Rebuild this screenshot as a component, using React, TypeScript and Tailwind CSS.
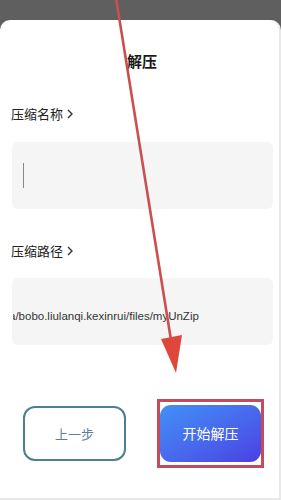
import React from "react";

export default function App() {
  const font = { fontFamily: '"Noto Sans CJK SC", "Liberation Sans", sans-serif' };
  return (
    <div className="relative w-[281px] h-[500px] bg-[#5f5f5f] pt-[20px] overflow-hidden" style={font}>
      <div className="h-[480px] bg-white rounded-t-[10px] border-r-[2px] border-b-[2px] border-[#e9e9e9] flex flex-col">
        <div className="h-[42px] pt-[31px] text-center text-[15px] font-bold leading-[20px] text-[#1a1a1a]">
          <div className="pl-[5px]">解压</div>
        </div>
        <div className="mt-[43px] pl-[11px] text-[13px] leading-[18px] text-[#222] flex items-center">
          压缩名称
          <svg width="8" height="12" viewBox="0 0 8 12" className="ml-[3px]">
            <path d="M2 2 L6 6 L2 10" stroke="#333" strokeWidth="1.4" fill="none" />
          </svg>
        </div>
        <div className="mt-[19px] ml-[12px] w-[261px] h-[67px] bg-[#f5f5f5] rounded-[6px] flex items-center">
          <div className="ml-[11px] w-[1px] h-[25px] bg-[#8a8a8a]" />
        </div>
        <div className="mt-[33px] pl-[11px] text-[13px] leading-[18px] text-[#222] flex items-center">
          压缩路径
          <svg width="8" height="12" viewBox="0 0 8 12" className="ml-[3px]">
            <path d="M2 2 L6 6 L2 10" stroke="#333" strokeWidth="1.4" fill="none" />
          </svg>
        </div>
        <div className="mt-[18px] ml-[12px] w-[261px] h-[67px] bg-[#f5f5f5] rounded-[6px] flex items-center">
          <div className="ml-[1px] mt-[11px] overflow-hidden whitespace-nowrap">
            <span
              className="block -ml-[4px] text-[11.5px] text-[#333]"
              style={{ fontFamily: '"Liberation Sans", sans-serif' }}
            >
              a/bobo.liulanqi.kexinrui/files/myUnZip
            </span>
          </div>
        </div>
        <div className="mt-[54px] flex items-center">
          <div className="ml-[23px] w-[103px] h-[55px] border-[2px] border-[#4f7d95] rounded-[12px] flex items-center justify-center text-[13px] text-[#5a7f99]">
            上一步
          </div>
          <div className="ml-[31px] w-[107px] h-[69px] border-[3px] border-[#c24c5e] flex items-center justify-center">
            <div className="w-[101px] h-[57px] rounded-[11px] bg-gradient-to-br from-[#4190f7] to-[#4a3ee3] flex items-center justify-center text-[14px] text-white">
              开始解压
            </div>
          </div>
        </div>
      </div>
      <svg className="absolute left-0 top-0" width="281" height="500" viewBox="0 0 281 500">
        <line x1="116" y1="-2" x2="171" y2="340" stroke="#c9504f" strokeWidth="2.6" />
        <polygon points="161,339 182,335 176,373" fill="#e0473c" />
      </svg>
    </div>
  );
}
